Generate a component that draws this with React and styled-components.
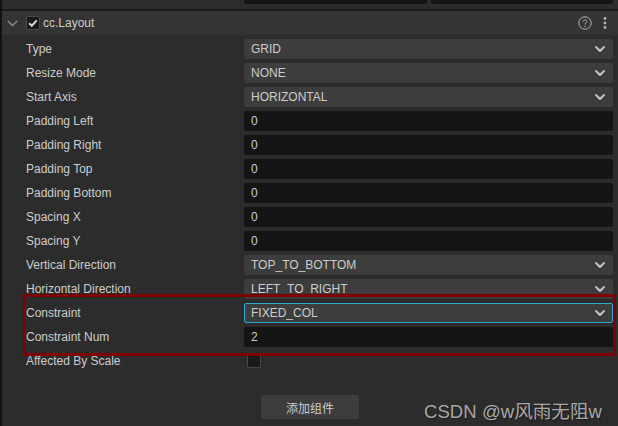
import styled, { createGlobalStyle } from 'styled-components'
import { ChevronDown } from 'lucide-react'

const GlobalStyle = createGlobalStyle`
  html, body {
    margin: 0;
    padding: 0;
    background: #2c2c2c;
  }
  * {
    box-sizing: border-box;
  }
`

const Page = styled.div`
  position: relative;
  width: 618px;
  height: 426px;
  overflow: hidden;
  background: #2c2c2c;
  border-left: 2px solid #111;
  color: #cccccc;
  font: 12px 'Liberation Sans', 'Noto Sans CJK SC', sans-serif;
`

const TopStrip = styled.div`
  display: flex;
  gap: 4px;
  height: 10px;
  padding-left: 242px;
  padding-right: 5px;
  border-bottom: 1px solid #1b1b1b;
`

const TopField = styled.div`
  flex: 1;
  height: 4px;
  background: #151515;
  border-radius: 0 0 3px 3px;
`

const Header = styled.div`
  display: flex;
  align-items: center;
  height: 25px;
  padding: 0 11px 0 2px;
  background: #343434;
  border-top: 1px solid #1b1b1b;
`

const Caret = styled(ChevronDown)`
  color: #7d7d7d;
  margin-right: 5px;
`

const CheckBox = styled.div`
  display: flex;
  align-items: center;
  justify-content: center;
  width: 14px;
  height: 14px;
  margin-right: 3px;
  background: #1a1a1a;
  border: 1px solid #4a4a4a;
  border-radius: 2px;
`

const Title = styled.span`
  flex: 1;
`

const HeaderIcon = styled.svg`
  display: block;
  color: #b4b4b4;
  margin-left: ${p => p.$gap || 0}px;
`

const Rows = styled.div`
  display: flex;
  flex-direction: column;
  gap: 4px;
  padding: 4px 5px 0 24px;
`

const Row = styled.div`
  display: flex;
  align-items: center;
  height: 20px;
`

const Label = styled.span`
  width: 218px;
  flex: none;
`

const Field = styled.div`
  flex: 1;
  display: flex;
  align-items: center;
  justify-content: space-between;
  height: 20px;
  padding: 0 6px;
  border-radius: 2px;
  background: ${p => (p.$select ? '#3d3d3d' : '#151515')};
  border: 1px solid ${p => (p.$focus ? '#2fa8d5' : p.$select ? '#3d3d3d' : '#151515')};
`

const SelectCaret = styled(ChevronDown)`
  color: #c4c4c4;
  margin-right: -2px;
`

const SmallCheck = styled.div`
  width: 14px;
  height: 14px;
  margin-left: 3px;
  background: #1a1a1a;
  border: 1px solid #484848;
  border-radius: 2px;
`

const Footer = styled.div`
  display: flex;
  justify-content: center;
  margin-top: 24px;
`

const AddButton = styled.button`
  width: 98px;
  height: 24px;
  padding: 0;
  border: 0;
  border-radius: 2px;
  background: #3d3d3d;
  color: #cccccc;
  font: inherit;
`

const Highlight = styled.div`
  position: absolute;
  left: 21px;
  top: 294px;
  width: 593px;
  height: 62px;
  border: 3px solid #800000;
  pointer-events: none;
`

const Watermark = styled.div`
  position: absolute;
  right: 16px;
  top: 396px;
  color: #a8a8a8;
  font: 18.6px 'Liberation Sans', 'Noto Sans CJK SC', sans-serif;
  text-shadow: 1px 1px 1px #1c1c1c;
  white-space: nowrap;
`

const rows = [
  { label: 'Type', value: 'GRID', select: true },
  { label: 'Resize Mode', value: 'NONE', select: true },
  { label: 'Start Axis', value: 'HORIZONTAL', select: true },
  { label: 'Padding Left', value: '0' },
  { label: 'Padding Right', value: '0' },
  { label: 'Padding Top', value: '0' },
  { label: 'Padding Bottom', value: '0' },
  { label: 'Spacing X', value: '0' },
  { label: 'Spacing Y', value: '0' },
  { label: 'Vertical Direction', value: 'TOP_TO_BOTTOM', select: true },
  { label: 'Horizontal Direction', value: 'LEFT_TO_RIGHT', select: true },
  { label: 'Constraint', value: 'FIXED_COL', select: true, focus: true },
  { label: 'Constraint Num', value: '2' }
]

function App () {
  return (
    <Page>
      <GlobalStyle />
      <TopStrip>
        <TopField />
        <TopField />
      </TopStrip>
      <Header>
        <Caret size={17} strokeWidth={2.2} />
        <CheckBox>
          <svg width='10' height='10' viewBox='0 0 10 10'>
            <path d='M1.2 5.2 L3.8 7.8 L8.8 2.4' fill='none' stroke='#d8d8d8' strokeWidth='2' />
          </svg>
        </CheckBox>
        <Title>cc.Layout</Title>
        <HeaderIcon width='14' height='14' viewBox='0 0 14 14'>
          <circle cx='7' cy='7' r='6.2' fill='none' stroke='currentColor' strokeWidth='1' />
          <path d='M5.2 5.5 C5.2 3.4 8.8 3.4 8.8 5.5 C8.8 6.9 7 6.8 7 8.3' fill='none' stroke='currentColor' strokeWidth='1' />
          <circle cx='7' cy='10.2' r='0.7' fill='currentColor' />
        </HeaderIcon>
        <HeaderIcon $gap={11} width='4' height='14' viewBox='0 0 4 14'>
          <circle cx='2' cy='2.5' r='1.4' fill='currentColor' />
          <circle cx='2' cy='7' r='1.4' fill='currentColor' />
          <circle cx='2' cy='11.5' r='1.4' fill='currentColor' />
        </HeaderIcon>
      </Header>
      <Rows>
        {rows.map(row => (
          <Row key={row.label}>
            <Label>{row.label}</Label>
            <Field $select={row.select} $focus={row.focus}>
              {row.value}
              {row.select && <SelectCaret size={16} strokeWidth={3} />}
            </Field>
          </Row>
        ))}
        <Row>
          <Label>Affected By Scale</Label>
          <SmallCheck />
        </Row>
      </Rows>
      <Footer>
        <AddButton>添加组件</AddButton>
      </Footer>
      <Highlight />
      <Watermark>CSDN @w风雨无阻w</Watermark>
    </Page>
  )
}

export default App
